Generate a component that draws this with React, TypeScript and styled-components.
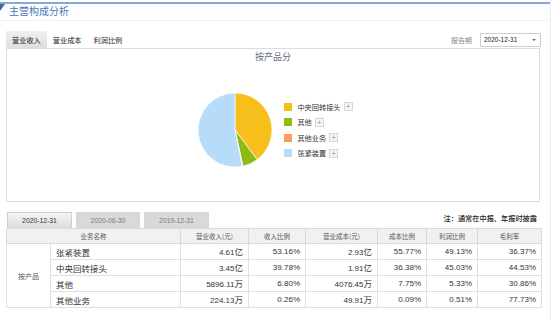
import React from "react";
import styled, { createGlobalStyle } from "styled-components";

const GlobalStyle = createGlobalStyle`
  html, body { margin: 0; padding: 0; background: #fff; }
  body { font-family: "Liberation Sans", "Noto Sans CJK SC", sans-serif; color: #333; }
`;

const CJK = `"Noto Sans CJK SC", "Liberation Sans", sans-serif`;
const NUM = `"Liberation Sans", "Noto Sans CJK SC", sans-serif`;

const Page = styled.div`
  width: 551px;
  min-height: 320px;
  border-right: 1px solid #ececec;
  box-sizing: border-box;
  padding-top: 2px;
`;

const TitleBar = styled.div`
  position: relative;
  border-top: 2px solid #86a9d6;
  height: 16px;
  display: flex;
  align-items: center;
  padding-left: 9px;
  background: linear-gradient(#fbfcfe, #ffffff);
  border-bottom: 1px solid #f3f3f3;
  &::before {
    content: "";
    position: absolute;
    left: 0;
    top: 0;
    border-top: 7px solid #3d6aa6;
    border-right: 5px solid transparent;
  }
`;

const Title = styled.span`
  font-family: ${CJK};
  font-size: 10px;
  color: #4a78b2;
  line-height: 1;
  margin-top: -2px;
`;

const Content = styled.div`
  width: 535px;
  margin-left: 6px;
`;

const Toolbar = styled.div`
  margin-top: 10px;
  height: 17px;
  display: flex;
  align-items: stretch;
  justify-content: space-between;
`;

const Tabs = styled.div`
  display: flex;
`;

const Tab = styled.div<{ $active?: boolean }>`
  font-family: ${CJK};
  font-size: 7.2px;
  color: #222;
  padding: 0 6px;
  display: flex;
  align-items: center;
  background: ${(p) => (p.$active ? "linear-gradient(#efefef, #dedede)" : "transparent")};
`;

const Period = styled.div`
  display: flex;
  align-items: center;
  gap: 8px;
`;

const PeriodLabel = styled.span`
  font-family: ${CJK};
  font-size: 7px;
  color: #888;
`;

const Select = styled.div`
  width: 61px;
  height: 14px;
  box-sizing: border-box;
  border: 1px solid #cfcfcf;
  display: flex;
  align-items: center;
  justify-content: space-between;
  padding: 0 4px 0 3px;
  font-family: ${NUM};
  font-size: 6.5px;
  color: #222;
`;

const Arrow = styled.span`
  width: 0;
  height: 0;
  border-left: 2px solid transparent;
  border-right: 2px solid transparent;
  border-top: 2px solid #3a78c2;
`;

const Panel = styled.div`
  height: 154px;
  box-sizing: border-box;
  border: 1px solid #dcdcdc;
  width: 534px;
  display: flex;
  flex-direction: column;
  align-items: center;
`;

const ChartTitle = styled.div`
  margin-top: 2px;
  font-family: ${CJK};
  font-size: 9px;
  color: #5f6f80;
  line-height: 12px;
`;

const ChartRow = styled.div`
  margin-top: 29px;
  display: flex;
  align-items: center;
  gap: 11px;
  margin-left: 4px;
`;

const Legend = styled.div`
  display: flex;
  flex-direction: column;
  gap: 7.5px;
`;

const LegendItem = styled.div`
  display: flex;
  align-items: center;
  height: 8px;
`;

const Swatch = styled.span<{ $c: string }>`
  width: 8px;
  height: 8px;
  background: ${(p) => p.$c};
  margin-right: 5px;
`;

const LegendText = styled.span`
  font-family: ${CJK};
  font-size: 7.2px;
  color: #333;
`;

const Plus = styled.span`
  margin-left: 3px;
  width: 7px;
  height: 7px;
  border: 1px solid #d6d6d6;
  background: #f5f5f5;
  color: #999;
  font-family: ${NUM};
  font-size: 8px;
  line-height: 7px;
  text-align: center;
`;

const PeriodTabsRow = styled.div`
  margin-top: 10px;
  height: 16px;
  display: flex;
  align-items: stretch;
  justify-content: space-between;
  padding-left: 1px;
`;

const PeriodTabs = styled.div`
  display: flex;
  gap: 4px;
`;

const PTab = styled.div<{ $active?: boolean; $w: number }>`
  width: ${(p) => p.$w}px;
  box-sizing: border-box;
  display: flex;
  align-items: center;
  justify-content: center;
  font-family: ${NUM};
  font-size: 6.8px;
  color: ${(p) => (p.$active ? "#333" : "#7a7a7a")};
  background: ${(p) => (p.$active ? "linear-gradient(#f4f4f4, #dcdcdc)" : "#d9d9d9")};
  border: 1px solid ${(p) => (p.$active ? "#d0d0d0" : "#d6d6d6")};
  border-bottom: none;
`;

const Note = styled.div`
  font-family: ${CJK};
  font-size: 7.2px;
  color: #222;
  font-weight: 500;
  display: flex;
  align-items: center;
  padding-right: 4px;
  margin-top: -5px;
`;

const Table = styled.table`
  width: 535px;
  border-collapse: collapse;
  table-layout: fixed;
  border: 1px solid #dadada;
`;

const Th = styled.th`
  height: 14px;
  padding: 0;
  background: #f1f1f1;
  border: 1px solid #dadada;
  font-family: ${CJK};
  font-size: 6.5px;
  font-weight: normal;
  color: #555;
  text-align: center;
`;

const Td = styled.td<{ $align?: "left" | "right" | "center" }>`
  height: 15px;
  padding: 0 5px;
  border: 1px solid #e0e0e0;
  font-family: ${NUM};
  font-size: 8px;
  line-height: 10px;
  color: #333;
  text-align: ${(p) => p.$align || "right"};
  white-space: nowrap;
`;

const GroupCell = styled(Td)`
  font-family: ${CJK};
  font-size: 7px;
  color: #555;
  text-align: center;
`;

const NameCell = styled(Td)`
  font-family: ${CJK};
  font-size: 8.5px;
  text-align: left;
`;

const Unit = styled.span`
  font-family: ${CJK};
  font-size: 8.5px;
`;

type Slice = { name: string; value: number; color: string };

const slices: Slice[] = [
  { name: "中央回转接头", value: 39.78, color: "#f6bf1c" },
  { name: "其他", value: 6.8, color: "#8ebb11" },
  { name: "其他业务", value: 0.26, color: "#ff9a57" },
  { name: "张紧装置", value: 53.16, color: "#b6dcf9" },
];

function Pie() {
  const r = 37;
  const c = 38;
  let acc = 0;
  const total = slices.reduce((s, x) => s + x.value, 0);
  return (
    <svg width="76" height="76" viewBox="0 0 76 76">
      {slices.map((s) => {
        const a0 = (acc / total) * Math.PI * 2 - Math.PI / 2;
        acc += s.value;
        const a1 = (acc / total) * Math.PI * 2 - Math.PI / 2;
        const large = a1 - a0 > Math.PI ? 1 : 0;
        const x0 = c + r * Math.cos(a0);
        const y0 = c + r * Math.sin(a0);
        const x1 = c + r * Math.cos(a1);
        const y1 = c + r * Math.sin(a1);
        return (
          <path
            key={s.name}
            d={`M${c},${c} L${x0},${y0} A${r},${r} 0 ${large} 1 ${x1},${y1} Z`}
            fill={s.color}
            stroke="#fff"
            strokeWidth={0.7}
          />
        );
      })}
    </svg>
  );
}

type Row = {
  name: string;
  rev: [string, string];
  revPct: string;
  cost: [string, string];
  costPct: string;
  profitPct: string;
  margin: string;
};

const rows: Row[] = [
  { name: "张紧装置", rev: ["4.61", "亿"], revPct: "53.16%", cost: ["2.93", "亿"], costPct: "55.77%", profitPct: "49.13%", margin: "36.37%" },
  { name: "中央回转接头", rev: ["3.45", "亿"], revPct: "39.78%", cost: ["1.91", "亿"], costPct: "36.38%", profitPct: "45.03%", margin: "44.53%" },
  { name: "其他", rev: ["5896.11", "万"], revPct: "6.80%", cost: ["4076.45", "万"], costPct: "7.75%", profitPct: "5.33%", margin: "30.86%" },
  { name: "其他业务", rev: ["224.13", "万"], revPct: "0.26%", cost: ["49.91", "万"], costPct: "0.09%", profitPct: "0.51%", margin: "77.73%" },
];

const colWidths = [44, 130, 68, 57, 72, 49, 51, 64];

export default function App() {
  return (
    <>
      <GlobalStyle />
      <Page>
        <TitleBar>
          <Title>主营构成分析</Title>
        </TitleBar>
        <Content>
          <Toolbar>
            <Tabs>
              <Tab $active>营业收入</Tab>
              <Tab>营业成本</Tab>
              <Tab>利润比例</Tab>
            </Tabs>
            <Period>
              <PeriodLabel>报告期</PeriodLabel>
              <Select>
                <span>2020-12-31</span>
                <Arrow />
              </Select>
            </Period>
          </Toolbar>
          <Panel>
            <ChartTitle>按产品分</ChartTitle>
            <ChartRow>
              <Pie />
              <Legend>
                {slices.map((s) => (
                  <LegendItem key={s.name}>
                    <Swatch $c={s.color} />
                    <LegendText>{s.name}</LegendText>
                    <Plus>+</Plus>
                  </LegendItem>
                ))}
              </Legend>
            </ChartRow>
          </Panel>
          <PeriodTabsRow>
            <PeriodTabs>
              <PTab $active $w={65}>2020-12-31</PTab>
              <PTab $w={64}>2020-06-30</PTab>
              <PTab $w={65}>2019-12-31</PTab>
            </PeriodTabs>
            <Note>注：通常在中报、年报时披露</Note>
          </PeriodTabsRow>
          <Table>
            <colgroup>
              {colWidths.map((w, i) => (
                <col key={i} style={{ width: w }} />
              ))}
            </colgroup>
            <thead>
              <tr>
                <Th colSpan={2}>业务名称</Th>
                <Th>营业收入(元)</Th>
                <Th>收入比例</Th>
                <Th>营业成本(元)</Th>
                <Th>成本比例</Th>
                <Th>利润比例</Th>
                <Th>毛利率</Th>
              </tr>
            </thead>
            <tbody>
              {rows.map((r, i) => (
                <tr key={r.name}>
                  {i === 0 && <GroupCell rowSpan={4}>按产品</GroupCell>}
                  <NameCell>{r.name}</NameCell>
                  <Td>
                    {r.rev[0]}
                    <Unit>{r.rev[1]}</Unit>
                  </Td>
                  <Td>{r.revPct}</Td>
                  <Td>
                    {r.cost[0]}
                    <Unit>{r.cost[1]}</Unit>
                  </Td>
                  <Td>{r.costPct}</Td>
                  <Td>{r.profitPct}</Td>
                  <Td>{r.margin}</Td>
                </tr>
              ))}
            </tbody>
          </Table>
        </Content>
      </Page>
    </>
  );
}
